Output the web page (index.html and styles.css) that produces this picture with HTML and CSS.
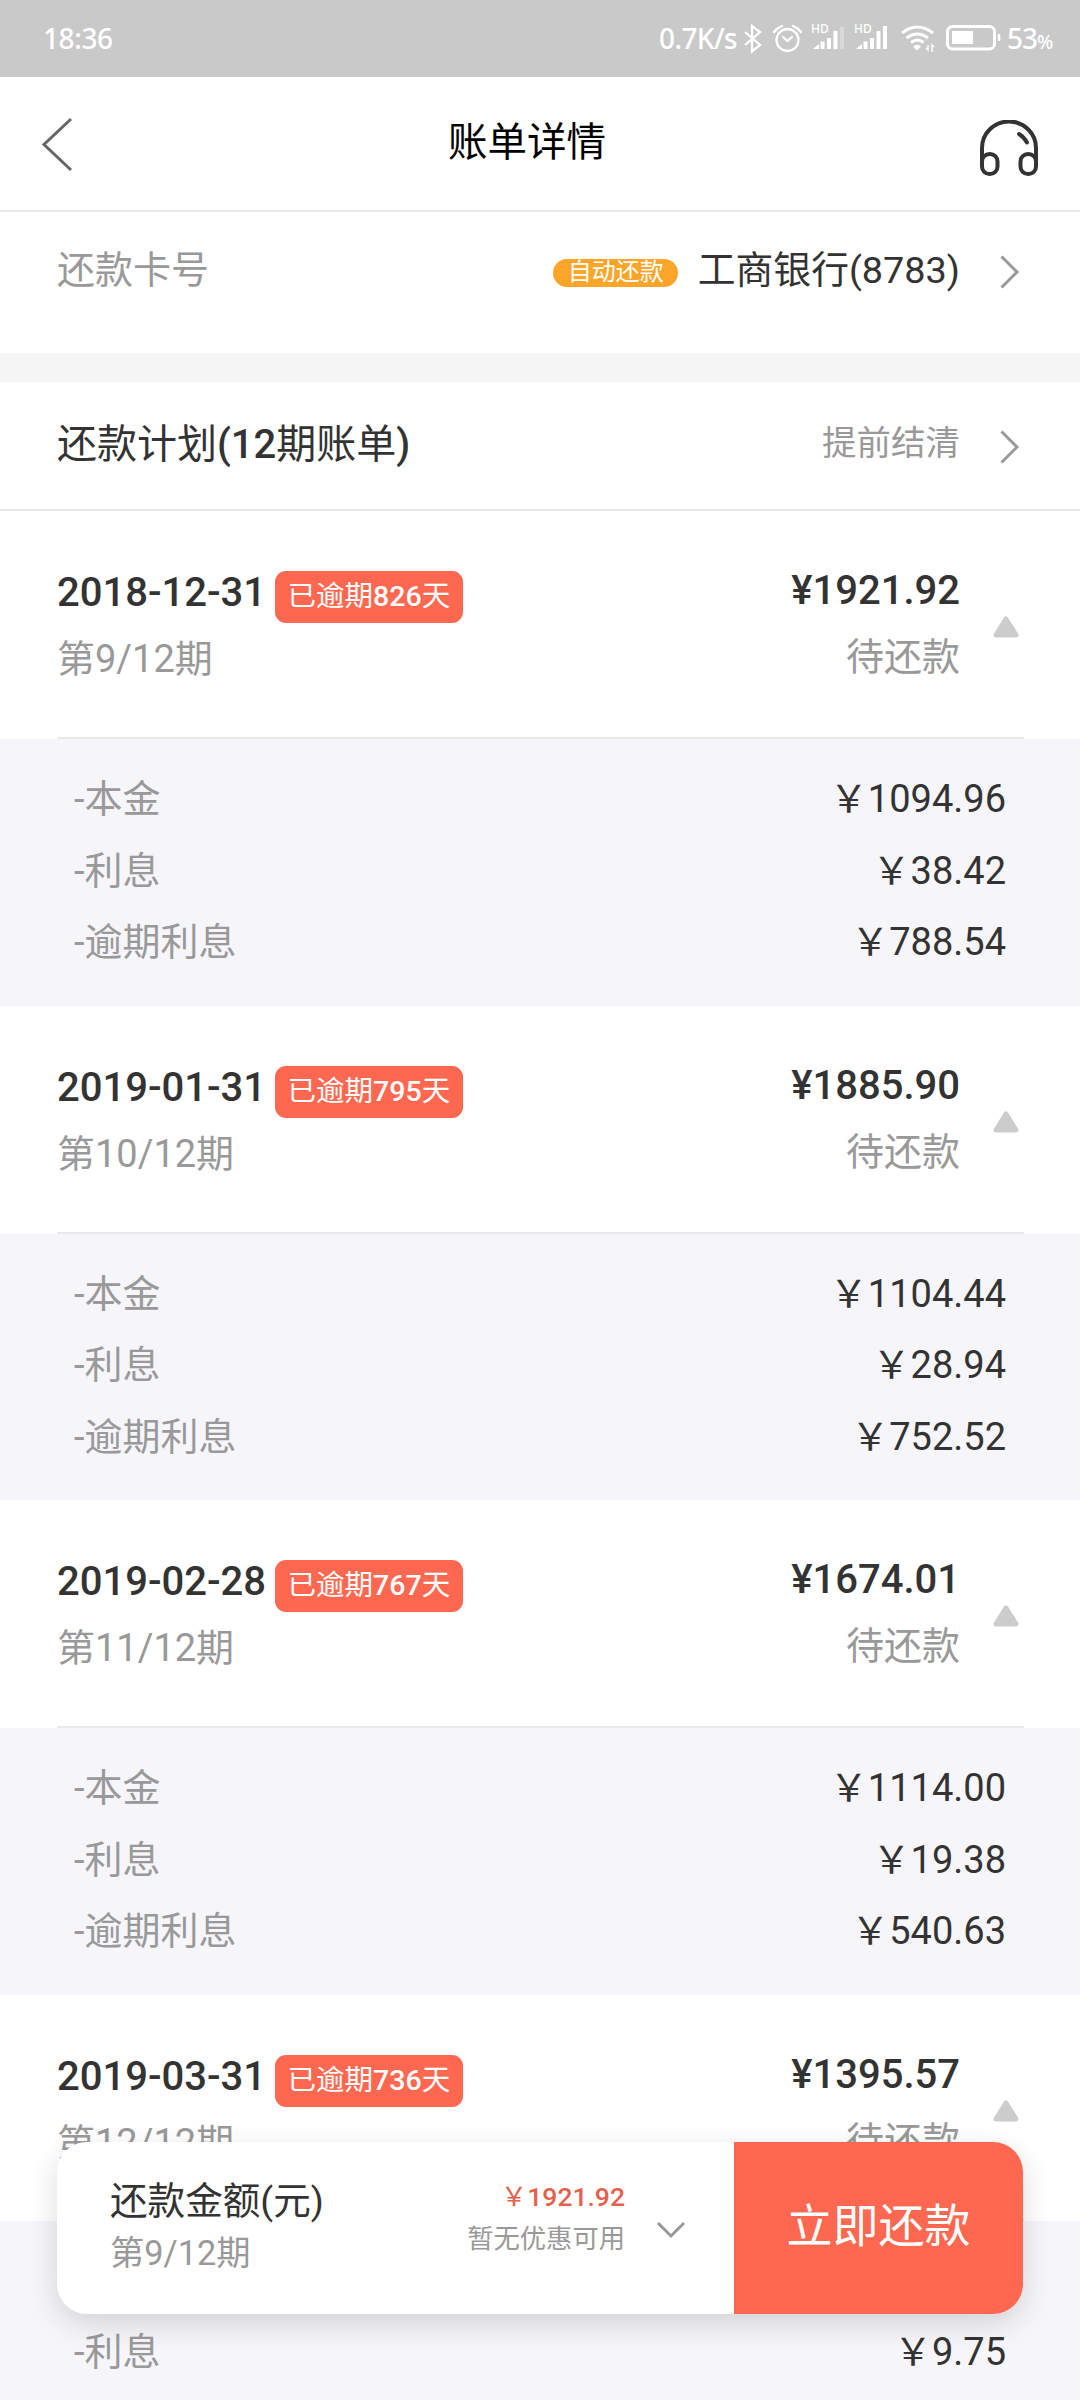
FILE: index.html
```html
<!DOCTYPE html>
<html lang="zh-CN">
<head>
<meta charset="utf-8">
<title>账单详情</title>
<link rel="stylesheet" href="styles.css">
</head>
<body>
<div class="screen">
  <div class="status">
    <span class="clock">18:36</span>
    <span class="speed">0.7K/s</span>
    <svg class="status-icons" width="264" height="44" viewBox="740 12 264 44" fill="none" stroke="#fff" stroke-width="2.300">
      <path d="M745 32l15 13-8 6.500V26l8 6-15 13"/>
      <circle cx="787.500" cy="40" r="11"/>
      <path d="M783 37l4.500 4 4.500-4M774 32q3-4 8-6M801 32q-3-4-8-6" stroke-linecap="round"/>
      <g fill="#fff" stroke="none">
        <text x="811" y="33" class="hd">HD</text>
        <path d="M813 49l6-5v5zM820.500 41.500h4V49h-4zM827 38h4v11h-4zM833.500 31h4v18h-4z"/>
        <path d="M840 27h4v22h-4z" opacity=".3"/>
        <text x="854" y="33" class="hd">HD</text>
        <path d="M856 49l6-5v5zM863.500 41.500h4V49h-4zM870 38h4v11h-4zM876.500 31h4v18h-4zM883 26h4v23h-4z"/>
        <path d="M913 46.500q4-3.500 8 0l-4 4z"/>
      </g>
      <path d="M902 33q15-12 31 0M906.500 38q10.500-8 21.500 0M911 42.500q6.500-5 12.500 0" stroke-width="3"/>
      <path d="M928 45v5l-2-2M932 52v-7l2 2" stroke-width="1.500"/>
      <rect x="947.500" y="26.500" width="47" height="22.500" rx="5" stroke-width="3"/>
      <path d="M952 31h21v13h-21z" fill="#fff" stroke="none"/>
      <path d="M999 34v7" stroke-width="2.500"/>
    </svg>
    <span class="battery">53<small>%</small></span>
  </div>

  <header class="header">
    <svg width="34" height="56" viewBox="0 0 34 56" fill="none" stroke="#666" stroke-width="3"><path d="M30 3L3 28.500 30 54"/></svg>
    <h1>账单详情</h1>
    <svg class="service" width="58" height="56" viewBox="0 0 58 56" fill="none" stroke="#333" stroke-width="4" stroke-linecap="round">
      <path d="M2 44V28a26.500 26 0 0 1 54 0v16"/>
      <rect x="2" y="34" width="15.500" height="20" rx="7.500"/>
      <rect x="40.500" y="34" width="15.500" height="20" rx="7.500"/>
      <path d="M39 14q5 3 8 8.500"/>
    </svg>
  </header>

  <section class="card-row">
    <span class="label">还款卡号</span>
    <span class="auto">自动还款</span>
    <span class="bank">工商银行(8783)</span>
    <svg class="chev" width="20" height="34" viewBox="0 0 20 34"><path d="M1.500 1.500L17 17 1.500 32.500"/></svg>
  </section>

  <section class="plan-row">
    <h2>还款计划<b>(12</b>期账单<b>)</b></h2>
    <span class="settle">提前结清</span>
    <svg class="chev" width="20" height="34" viewBox="0 0 20 34"><path d="M1.500 1.500L17 17 1.500 32.500"/></svg>
  </section>

  <main class="bills">
    <article>
      <div class="bill">
        <div class="when"><div class="date"><b>2018-12-31</b><span class="late">已逾期<b>826</b>天</span></div><div class="term">第9/12期</div></div>
        <div class="sum"><b>¥1921.92</b><div class="state">待还款</div></div>
        <svg class="tri" width="26" height="22" viewBox="0 0 26 22"><path d="M13 3L23 19H3z"/></svg>
      </div>
      <dl>
        <div><dt>-本金</dt><dd>￥1094.96</dd></div>
        <div><dt>-利息</dt><dd>￥38.42</dd></div>
        <div><dt>-逾期利息</dt><dd>￥788.54</dd></div>
      </dl>
    </article>
    <article>
      <div class="bill">
        <div class="when"><div class="date"><b>2019-01-31</b><span class="late">已逾期<b>795</b>天</span></div><div class="term">第10/12期</div></div>
        <div class="sum"><b>¥1885.90</b><div class="state">待还款</div></div>
        <svg class="tri" width="26" height="22" viewBox="0 0 26 22"><path d="M13 3L23 19H3z"/></svg>
      </div>
      <dl>
        <div><dt>-本金</dt><dd>￥1104.44</dd></div>
        <div><dt>-利息</dt><dd>￥28.94</dd></div>
        <div><dt>-逾期利息</dt><dd>￥752.52</dd></div>
      </dl>
    </article>
    <article>
      <div class="bill">
        <div class="when"><div class="date"><b>2019-02-28</b><span class="late">已逾期<b>767</b>天</span></div><div class="term">第11/12期</div></div>
        <div class="sum"><b>¥1674.01</b><div class="state">待还款</div></div>
        <svg class="tri" width="26" height="22" viewBox="0 0 26 22"><path d="M13 3L23 19H3z"/></svg>
      </div>
      <dl>
        <div><dt>-本金</dt><dd>￥1114.00</dd></div>
        <div><dt>-利息</dt><dd>￥19.38</dd></div>
        <div><dt>-逾期利息</dt><dd>￥540.63</dd></div>
      </dl>
    </article>
    <article>
      <div class="bill last">
        <div class="when"><div class="date"><b>2019-03-31</b><span class="late">已逾期<b>736</b>天</span></div><div class="term">第12/12期</div></div>
        <div class="sum"><b>¥1395.57</b><div class="state">待还款</div></div>
        <svg class="tri" width="26" height="22" viewBox="0 0 26 22"><path d="M13 3L23 19H3z"/></svg>
      </div>
      <dl>
        <div></div>
        <div><dt>-利息</dt><dd>￥9.75</dd></div>
      </dl>
    </article>
  </main>

  <footer class="pay">
    <div class="pay-info">
      <div class="pay-title">还款金额(元)</div>
      <div class="pay-term">第9/12期</div>
    </div>
    <div class="pay-sum">
      <div class="pay-amount">￥<b>1921.92</b></div>
      <div class="pay-note">暂无优惠可用</div>
    </div>
    <svg class="down" width="30" height="18" viewBox="0 0 30 18"><path d="M2 2l13 13L28 2"/></svg>
    <div class="pay-button">立即还款</div>
  </footer>
</div>
</body>
</html>
```
FILE: styles.css
```css
* { box-sizing: border-box; }
body, h1, h2, dl, dd { margin: 0; }
body {
  background: #fff;
  color: #333;
  font: 400 38px/50px Roboto, "Noto Sans CJK SC", sans-serif;
}
b { font-weight: 500; }
svg { display: block; flex: none; }
.screen { position: relative; width: 1080px; height: 2400px; overflow: hidden; white-space: nowrap; }

.status {
  display: flex;
  height: 77px;
  background: #c9c9c9;
  color: #fff;
  font: 500 28px/77px "Noto Sans", sans-serif;
}
.clock { width: 616px; padding-left: 43px; letter-spacing: -.4px; }
.speed { width: 80px; margin-left: 43px; letter-spacing: -.6px; }
.status-icons { margin: 12px 3px 0 1px; }
.hd { font: 500 12px "Noto Sans", sans-serif; }
.battery { letter-spacing: -1px; }
.battery small { font-size: 19px; }

.header {
  display: flex;
  justify-content: space-between;
  height: 135px;
  padding: 39px 42px 0 41px;
  border-bottom: 2px solid #e9e9e9;
}
.header h1 { margin: 2px 0 0 -1px; color: #000; font-size: 39.500px; font-weight: 400; line-height: 50px; }
.service { margin-top: 4px; }

.card-row, .plan-row { display: flex; padding: 0 60px 0 57px; }
.card-row { height: 170px; padding-top: 33px; border-bottom: 29px solid #f5f5f5; }
.label, .settle, .term, .state, dt { color: #999; }
.label { margin-right: auto; }
.auto {
  height: 28px;
  margin: 14px 20px 0 0;
  padding: 0 14px 0 15px;
  border-radius: 14px;
  background: #fda528;
  color: #fff;
  font-size: 24px;
  line-height: 27px;
}
.bank { font-size: 37.800px; }
.chev { margin: 10px 0 0 40px; }
.chev path, .down path { fill: none; stroke: #999; stroke-width: 3; }
.plan-row { height: 129px; padding-top: 38px; border-bottom: 2px solid #e9e9e9; }
.plan-row h2 { margin-right: auto; font-size: 40px; font-weight: 400; line-height: 50px; }
.settle { font-size: 34.500px; line-height: 47px; }

.bill { display: flex; height: 228px; margin: 0 56px 0 57px; border-bottom: 2px solid #e9e9e9; }
.bill.last { height: 226px; }
.when { margin-right: auto; padding-top: 57px; }
.date { display: flex; height: 66px; font-size: 40px; }
.date > b { width: 207px; }
.late {
  height: 52px;
  margin: 3px 0 0 11px;
  padding: 0 12.500px;
  border-radius: 11px;
  background: #ff6850;
  color: #fff;
  font-size: 28.500px;
  line-height: 51px;
}
.sum { padding-top: 55px; text-align: right; font-size: 40px; }
.state { margin-top: 16px; font-size: 38px; }
.tri { margin: 105px 5px 0 33px; }
.tri path { fill: #ccc; stroke: #ccc; stroke-width: 5; stroke-linejoin: round; }
dl { height: 266.670px; padding: 25px 74px 0; background: #f5f5fa; }
dl div { display: flex; justify-content: space-between; height: 71.500px; line-height: 71.500px; }

/* Payment bar floating over the list */
.pay {
  position: absolute;
  left: 57px;
  top: 2142px;
  display: flex;
  width: 966px;
  height: 172px;
  border-radius: 30px;
  background: #fff;
  box-shadow: 0 10px 30px rgba(0, 0, 0, .14);
}
.pay-info { margin-right: auto; padding: 34px 0 0 53px; }
.pay-title { font-size: 37.600px; }
.pay-term { margin-top: 2px; color: #999; font-size: 34.300px; }
.pay-sum { padding-top: 33px; text-align: right; }
.pay-amount { color: #e5614d; font-size: 26.500px; line-height: 44px; }
.pay-note { color: #999; font-size: 26.300px; line-height: 40px; }
.down { margin: 79px 48px 0 31px; }
.pay-button {
  width: 289px;
  border-radius: 0 30px 30px 0;
  background: #ff6850;
  color: #fff;
  font-size: 46px;
  line-height: 168px;
  text-align: center;
}
```
